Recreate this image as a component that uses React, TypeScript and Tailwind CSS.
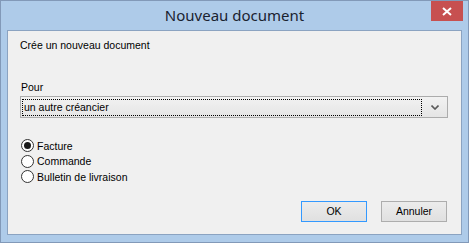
import { useState } from 'react';

const options = ['Facture', 'Commande', 'Bulletin de livraison'];

const Radio = ({ checked, label, onClick }: { checked: boolean; label: string; onClick: () => void }) => (
    <div className="flex items-center h-[15.5px] cursor-default" onClick={onClick}>
        <span className="w-[13px] h-[13px] rounded-full border border-[#333333] bg-white flex items-center justify-center">
            {checked && <span className="w-[7px] h-[7px] rounded-full bg-[#1a1a1a]" />}
        </span>
        <span className="ml-[3px] leading-none">{label}</span>
    </div>
);

export default function App() {
    const [selected, setSelected] = useState(0);

    return (
        <div
            className="w-[469px] h-[243px] border border-[#8299b8] bg-[#aecbe9] px-[6px] pb-[7px] pt-[29px] relative"
            style={{ fontFamily: '"Liberation Sans", Arial, sans-serif' }}
        >
            {/* title bar */}
            <div className="absolute left-0 right-0 top-0 h-[29px] flex items-center justify-center">
                <span
                    className="text-[15px] text-[#1a2230] leading-none"
                    style={{ fontFamily: '"Noto Sans", "Open Sans", sans-serif' }}
                >
                    Nouveau document
                </span>
            </div>
            <button className="absolute top-0 right-[5px] w-[32px] h-[20px] bg-[#c75050] flex items-center justify-center">
                <svg width="10" height="9" viewBox="0 0 10 9">
                    <path d="M1 1 L9 8 M9 1 L1 8" stroke="white" strokeWidth="2" />
                </svg>
            </button>

            {/* client area */}
            <div className="h-full border border-[#8ba3c1] bg-[#f0f0f0] text-[10.5px] text-black px-[12px] pt-[8px] flex flex-col">
                <div className="leading-[13px]">Crée un nouveau document</div>

                <div className="mt-[29px] leading-[13px] pl-[1px]">Pour</div>
                <div className="mt-[2px] w-[428px] h-[22px] border border-[#acacac] bg-gradient-to-b from-[#f2f2f2] to-[#e5e5e5] flex items-center pl-[1px] pr-[8px]">
                    <div className="flex-1 h-[17px] border border-dotted border-black flex items-center pl-[1px] leading-none">
                        un autre créancier
                    </div>
                    <svg className="ml-[9px]" width="8" height="5" viewBox="0 0 8 5">
                        <path d="M0.5 0.5 L4 4 L7.5 0.5" stroke="#5a5a5a" strokeWidth="1.6" fill="none" />
                    </svg>
                </div>

                <div className="mt-[20px] flex flex-col pl-[1px]">
                    {options.map((o, i) => (
                        <Radio key={o} label={o} checked={selected === i} onClick={() => setSelected(i)} />
                    ))}
                </div>

                <div className="mt-auto mb-[12px] flex justify-end gap-[14px] pr-[2px]">
                    <button className="w-[66px] h-[21px] border border-[#3399ff] bg-gradient-to-b from-[#ececec] to-[#e0e0e0] leading-none">
                        OK
                    </button>
                    <button className="w-[66px] h-[21px] border border-[#adadad] bg-gradient-to-b from-[#ececec] to-[#e0e0e0] leading-none">
                        Annuler
                    </button>
                </div>
            </div>
        </div>
    );
}
